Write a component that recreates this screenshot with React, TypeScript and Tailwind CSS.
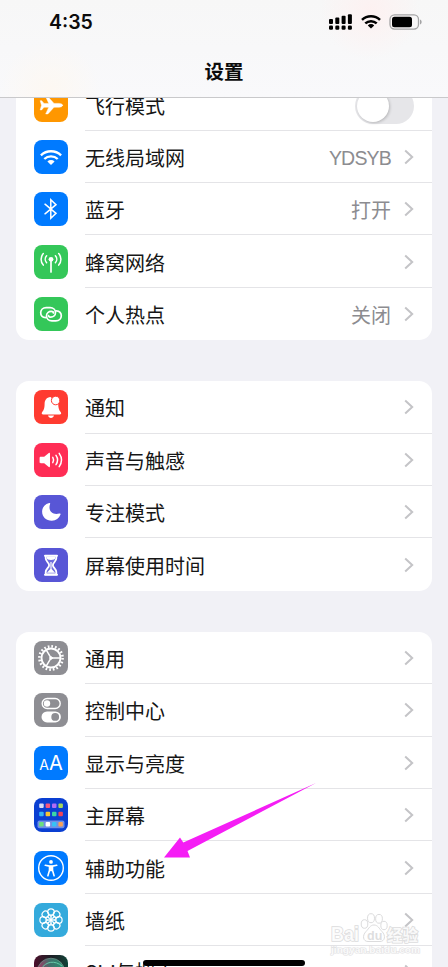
import type { ReactNode } from "react";

type Item = { label: ReactNode; bg: string; icon: ReactNode; value?: string; tight?: boolean; toggle?: boolean };

const Glyph = ({ children }: { children: ReactNode }) => (
  <svg viewBox="0 0 34 34" className="block size-[34px]" fill="none" stroke="white" strokeLinecap="round" strokeLinejoin="round">
    {children}
  </svg>
);

const petals = [0, 45, 90, 135, 180, 225, 270, 315];
const tiles = [
  ["#d5dcf5", "#f5577f", "#b06cf5", "#a6d65a"],
  ["#35b6f5", "#f7c331", "#3cd6a5", "#f0435a"],
  ["#6be07e", "#ffffff", "#35c3f5", "#f7a05a"],
];

const network: Item[] = [
  {
    label: "飞行模式", bg: "bg-[#ff9700]", toggle: true,
    icon: (
      <Glyph>
        <path stroke="white" strokeWidth=".5" fill="white" d="M28.600 17.300c0-1.200-1.600-1.900-3.400-1.900h-5.200L13.900 8.700h-2.200l3.100 6.700H10l-2.300-2.700H6.200l1.300 4.600-1.300 4.600h1.500L10 19.200h4.800l-3.100 6.700h2.200l6.100-6.700h5.200c1.800 0 3.400-.7 3.400-1.900z" />
      </Glyph>
    ),
  },
  {
    label: "无线局域网", bg: "bg-[#007aff]", value: "YDSYB", tight: true,
    icon: (
      <Glyph>
        <g strokeWidth="2.300" strokeLinecap="butt">
          <path d="M6.900 15.300a14.600 14.600 0 0 1 20.200 0" />
          <path d="M10.300 19a9.600 9.600 0 0 1 13.400 0" />
        </g>
        <path stroke="none" fill="white" d="M13.400 21.400a5.200 5.200 0 0 1 7.200 0L17 25z" />
      </Glyph>
    ),
  },
  {
    label: "蓝牙", bg: "bg-[#007aff]", value: "打开",
    icon: <Glyph><path strokeWidth="1.500" strokeLinejoin="miter" d="M11 12.200l11 9.200-5.200 4.900V7.700l5.200 4.900-11 9.200" /></Glyph>,
  },
  {
    label: "蜂窝网络", bg: "bg-[#34c759]",
    icon: (
      <Glyph>
        <circle cx="17" cy="14.300" r="2.400" fill="white" stroke="none" />
        <path strokeWidth="1.700" d="M17 15v12" />
        <path strokeWidth="1.500" d="M12.600 10.800a5.200 5.200 0 0 0 0 7M21.400 10.800a5.200 5.200 0 0 1 0 7M9.300 8.500a8.700 8.700 0 0 0 0 11.600M24.700 8.500a8.700 8.700 0 0 1 0 11.600" />
      </Glyph>
    ),
  },
  {
    label: "个人热点", bg: "bg-[#34c759]", value: "关闭",
    icon: (
      <Glyph>
        <g strokeWidth="1.700">
          <path d="M11.700 20.700c-3-.2-5-2.200-5-4.900 0-3 2.300-5.100 5.500-5.100h3.900c3.200 0 5.400 2.200 5.400 4.900 0 2.900-2.300 4.600-4.700 4.600-1.300 0-2.200-.6-2.200-1.500" />
          <path d="M22.300 13.900c3 .2 5 2.200 5 4.900 0 3-2.300 5.100-5.500 5.100h-3.900c-3.200 0-5.400-2.200-5.400-4.900 0-2.900 2.300-4.600 4.700-4.600 1.300 0 2.200.6 2.200 1.500" />
        </g>
      </Glyph>
    ),
  },
];

const alerts: Item[] = [
  {
    label: "通知", bg: "bg-[#ff3b30]",
    icon: (
      <Glyph>
        <path stroke="none" fill="white" d="M16.500 7c-4 .3-5.900 3.300-5.900 6.700 0 5.300-1.200 6.700-2.500 8.500-.8 1.100-.3 2.300 1 2.300h16.700c1.300 0 1.800-1.200 1-2.300-1.300-1.800-2.500-3.200-2.600-8.500zM14 25.600h6c-.4 1.500-1.500 2.300-3 2.300s-2.600-.8-3-2.300z" />
        <circle cx="21.700" cy="10.500" r="4.300" fill="white" stroke="#ff3b30" strokeWidth="1" />
      </Glyph>
    ),
  },
  {
    label: "声音与触感", bg: "bg-[#ff2d55]",
    icon: (
      <Glyph>
        <path stroke="none" fill="white" d="M6.800 13.800h3.400l4.600-3.700c.6-.5 1.200-.2 1.200.6v12.600c0 .8-.6 1.100-1.200.6l-4.600-3.700H6.800c-.8 0-1.200-.4-1.200-1.200v-4c0-.8.4-1.200 1.200-1.200z" />
        <path strokeWidth="1.500" d="M18.800 14.400a5 5 0 0 1 0 5.200M22 12.400a8.200 8.200 0 0 1 0 9.200M25.200 10.400a11.500 11.500 0 0 1 0 13.200" />
      </Glyph>
    ),
  },
  {
    label: "专注模式", bg: "bg-[#5856d6]",
    icon: <Glyph><path stroke="none" fill="white" d="M15.200 8.100c.7-.3 1.200.2.900.9-2.400 6.600 2.400 11.500 9.300 9.500 1-.3 1.500.2 1.100 1a9.500 9.500 0 0 1-8.700 6.200c-5.600 0-9.700-4-9.700-9.300 0-3.700 2.500-7 7.100-8.300z" /></Glyph>,
  },
  {
    label: "屏幕使用时间", bg: "bg-[#5856d6]",
    icon: (
      <Glyph>
        <path strokeWidth="2" d="M11 7.700h12M11 26.700h12" />
        <path strokeWidth="1.800" fill="white" fillOpacity=".15" d="M11.700 8v2.300c0 3.500 3.400 4.200 3.400 6.900s-3.400 3.400-3.400 6.900v2.300h10.600v-2.300c0-3.500-3.400-4.200-3.400-6.900s3.400-3.400 3.400-6.900V8" />
        <path stroke="none" fill="white" d="M12.700 8.500h8.600v1.600c0 1.300-1.800 1.800-4.300 1.800s-4.300-.5-4.300-1.800zM16.400 14h1.200v7l3.500 3.800h-8.200l3.500-3.800z" />
      </Glyph>
    ),
  },
];

const general: Item[] = [
  {
    label: "通用", bg: "bg-[#8e8e93]",
    icon: (
      <Glyph>
        <circle cx="17" cy="17" r="11.600" strokeWidth="2.600" strokeLinecap="butt" strokeDasharray="1.700 1.944" />
        <circle cx="17" cy="17" r="9.500" strokeWidth="1.900" />
        <circle cx="17" cy="17" r="1.300" strokeWidth="1" fill="white" />
        <path strokeWidth="1.500" d="M18 17h8M16.500 16.100l-4.300-7.300M16.500 17.900l-4.300 7.300" />
      </Glyph>
    ),
  },
  {
    label: "控制中心", bg: "bg-[#8e8e93]",
    icon: (
      <Glyph>
        <rect x="8.200" y="5.500" width="18" height="10" rx="5" strokeWidth="1.400" />
        <circle cx="13" cy="10.500" r="3.200" fill="white" stroke="none" />
        <rect x="7.500" y="18.400" width="19.400" height="11" rx="5.500" fill="white" stroke="none" />
        <circle cx="21.200" cy="23.900" r="3.900" fill="#8e8e93" stroke="none" />
      </Glyph>
    ),
  },
  {
    label: "显示与亮度", bg: "bg-[#007aff]",
    icon: (
      <div className="flex h-[34px] items-baseline justify-center pt-[3px] font-['Inter'] leading-[28px] text-white">
        <span className="text-[14px]">A</span>
        <span className="text-[20px]">A</span>
      </div>
    ),
  },
  {
    label: "主屏幕", bg: "bg-[#0a3fd2]",
    icon: (
      <Glyph>
        <rect x="3.500" y="22.600" width="27" height="7.600" rx="2" fill="#6f8fe6" stroke="none" />
        {tiles.map((row, r) =>
          row.map((c, i) => (
            <rect key={c + i} x={5.200 + i * 6.400} y={[5.500, 13.700, 24.100][r]} width="4.500" height="4.500" rx="1" fill={c} stroke="none" />
          )),
        )}
      </Glyph>
    ),
  },
  {
    label: "辅助功能", bg: "bg-[#007aff]",
    icon: (
      <Glyph>
        <circle cx="17" cy="17" r="12.300" strokeWidth="1.400" />
        <circle cx="17" cy="10.900" r="1.900" fill="white" stroke="none" />
        <path strokeWidth="1.600" d="M11.300 14.300l4.200.8h3l4.200-.8M15.500 15.300v4l-1.600 5.500M18.500 15.300v4l1.600 5.500" />
        <path fill="white" stroke="none" d="M15 14.800h4v5.500h-4z" />
      </Glyph>
    ),
  },
  {
    label: "墙纸", bg: "bg-[#34aadc]",
    icon: (
      <Glyph>
        <g strokeWidth="1.200">
          {petals.map((a) => (
            <ellipse key={a} cx="17" cy="9" rx="3.300" ry="3.100" transform={`rotate(${a} 17 17)`} />
          ))}
          {petals.map((a) => (
            <circle key={a} cx="17" cy="13.400" r="1.500" strokeWidth=".8" transform={`rotate(${a + 22.5} 17 17)`} />
          ))}
        </g>
        <circle cx="17" cy="17" r="1.900" fill="white" stroke="none" />
      </Glyph>
    ),
  },
  {
    label: <span className="block -mt-[3px] font-['Inter','Noto_Sans_CJK_SC']">Siri与搜索</span>,
    bg: "bg-linear-to-r from-[#4c0c2c] via-[#1b1d25] to-[#0b4438]",
    icon: (
      <Glyph>
        <defs>
          <linearGradient id="orb" x1="0" x2="1">
            <stop offset="0" stopColor="#a83464" />
            <stop offset=".45" stopColor="#41706c" />
            <stop offset="1" stopColor="#27926f" />
          </linearGradient>
        </defs>
        <circle cx="17" cy="17" r="13.800" fill="url(#orb)" stroke="#6b8f87" strokeWidth=".8" />
        <path stroke="#66c9a8" strokeWidth="1" d="M7 14c5-8 14-9 21-3" />
      </Glyph>
    ),
  },
];

function Row({ item, last }: { item: Item; last: boolean }) {
  return (
    <div className="flex h-[52.400px] items-center pl-[18px]">
      <div className={`size-[34px] shrink-0 overflow-hidden rounded-[8px] ${item.bg}`}>{item.icon}</div>
      <div className={`ml-[17px] flex h-full flex-1 items-center border-b pr-[18px] ${last ? "border-transparent" : "border-[#e4e4e7]"}`}>
        <span className="flex-1 pt-[5px] text-[20px] leading-[30px] text-[#161616]">{item.label}</span>
        {item.value && (
          <span className={`mr-[13px] leading-[30px] text-[#8c8c90] ${item.tight ? "pt-[3px] text-[19.500px] tracking-[-0.800px]" : "pt-[5px] text-[20px]"}`}>
            {item.value}
          </span>
        )}
        {item.toggle ? (
          <span className="mt-[3px] flex h-[36px] w-[59px] items-center rounded-full bg-[#e6e6e9] pl-[2px]">
            <span className="size-[32px] rounded-full bg-white shadow-[1px_1px_3px_rgba(0,0,0,0.2)]" />
          </span>
        ) : (
          <svg viewBox="0 0 10 16" className="mt-[1px] h-[16px] w-[10px]" fill="none" stroke="#c4c4c7" strokeWidth="2">
            <path d="M1.200 1.500L8.200 8l-7 6.500" />
          </svg>
        )}
      </div>
    </div>
  );
}

function Card({ items, open }: { items: Item[]; open?: boolean }) {
  return (
    <section className="shrink-0 overflow-hidden rounded-[13px] bg-white">
      {items.map((item, i) => (
        <Row key={i} item={item} last={!open && i === items.length - 1} />
      ))}
    </section>
  );
}

export default function App() {
  return (
    <div className="relative flex h-[967px] w-[448px] flex-col overflow-hidden bg-[#f1f1f6] font-['Liberation_Sans','Noto_Sans_CJK_SC',sans-serif]">
      <header className="flex h-[98px] shrink-0 flex-col border-b border-[#c9c9cb] bg-[radial-gradient(circle_at_370px_10px,#fdf1f1_0px,#fdf1f100_50px),radial-gradient(circle_at_50px_90px,#fdf8f2_0px,#fdf8f200_50px),linear-gradient(#f7f7f7,#f9f9fb)]">
        <div className="flex h-[43px] items-center justify-between pr-[26.500px] pl-[49px]">
          <span className="pt-[2px] font-['Inter'] text-[19.500px] font-semibold text-[#0c0c0c]">4:35</span>
          <div className="flex items-center">
            <svg viewBox="0 0 24 16" className="h-[16px] w-[24px]">
              {[0, 1, 2, 3].map((i) => (
                <g key={i}>
                  <rect x={i * 6.300} y={5 - i * 1.600} width="4" height={5 + i * 1.600} rx="1" />
                  <rect x={i * 6.300} y="11.500" width="4" height="4.200" rx="1.300" />
                </g>
              ))}
            </svg>
            <svg viewBox="0 0 20 15" className="ml-[8px] h-[15px] w-[20px]" fill="none" stroke="black" strokeWidth="2.500">
              <path d="M1 5.800a13 13 0 0 1 18 0M4.300 9.400a8.300 8.300 0 0 1 11.400 0" />
              <path stroke="none" fill="black" d="M6.800 11.400a4.600 4.600 0 0 1 6.400 0L10 14.600z" />
            </svg>
            <svg viewBox="0 0 33 16" className="ml-[8px] h-[16px] w-[33px]">
              <rect x="1" y=".9" width="28.500" height="14.200" rx="4.500" fill="none" stroke="#a4a4a5" strokeWidth="1.300" />
              <rect x="3" y="2.700" width="20" height="10.600" rx="2.500" />
              <path fill="#a4a4a5" d="M31 5.500c2.200.8 2.200 4.200 0 5z" />
            </svg>
          </div>
        </div>
        <h1 className="pt-[14px] text-center text-[19.500px] leading-[30px] font-bold text-[#0c0c0c]">设置</h1>
      </header>

      <main className="flex min-h-0 flex-1 flex-col overflow-hidden px-[16px]">
        <div className="-mt-[19.700px] flex shrink-0 flex-col gap-[41px]">
          <Card items={network} />
          <Card items={alerts} />
          <Card items={general} open />
        </div>
      </main>

      <svg viewBox="0 0 152 75" className="absolute top-[782.500px] left-[164px] h-[75px] w-[152px]">
        <path fill="#f51df5" d="M0 74.500L16 54.500l3.300 5L152 0 23.500 68l2.500 6.500z" />
      </svg>

      <svg viewBox="0 0 94 46" className="absolute top-[911px] left-[329px] h-[46px] w-[94px]" fill="white" fillOpacity=".85" stroke="#dcdcdd" strokeWidth="1">
        <g fontFamily="Liberation Sans, Noto Sans CJK SC, sans-serif" fontWeight="bold" paintOrder="stroke">
          <text x="2" y="29.500" fontSize="19.500" textLength="28" lengthAdjust="spacingAndGlyphs" strokeWidth="1.600">Bai</text>
          <text x="58" y="29.500" fontSize="15.500" textLength="31" strokeWidth="1.600">经验</text>
          <text x="2" y="42" fontSize="9.500" textLength="89" lengthAdjust="spacingAndGlyphs" stroke="#e2e2e3" strokeWidth="1.200">jingyan.baidu.com</text>
        </g>
        <path d="M45 14c4 0 5 3.500 8 6.500 4 4 3 10-2 10H39c-5 0-6-6-2-10 3-3 4-6.500 8-6.500z" />
        <ellipse cx="35.500" cy="13" rx="3.300" ry="4.300" />
        <ellipse cx="42" cy="7.200" rx="3.500" ry="4.500" />
        <ellipse cx="50" cy="7.800" rx="3.400" ry="4.400" />
        <ellipse cx="55" cy="14.500" rx="3.200" ry="4.200" />
        <text x="38" y="28.500" fontFamily="Liberation Sans, sans-serif" fontWeight="bold" fontSize="12.500" fill="#d8d8d9" stroke="none">du</text>
      </svg>

      <div className="absolute top-[959.500px] left-[143px] h-[6px] w-[162px] rounded-full bg-black" />
    </div>
  );
}
